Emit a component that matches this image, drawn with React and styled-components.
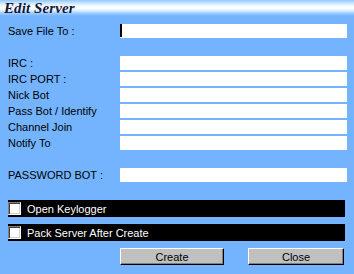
import React from "react";
import styled, { createGlobalStyle } from "styled-components";

const Global = createGlobalStyle`
  html, body { margin: 0; padding: 0; background: #74b4ff; }
  body { font-family: "Liberation Sans", Arial, sans-serif; }
`;

const Window = styled.div`
  width: 354px;
  height: 274px;
  background: #74b4ff;
  box-sizing: border-box;
  display: flex;
  flex-direction: column;
  overflow: hidden;
`;

const Header = styled.div`
  height: 24px;
  background: linear-gradient(
    to bottom,
    #92c8ff 0px,
    #c8e4ff 3px,
    #f4faff 6px,
    #ffffff 8px,
    #d6ebff 11px,
    #9fceff 13px,
    #74b4ff 16px,
    #74b4ff 100%
  );
  padding-left: 4px;
  box-sizing: border-box;
`;

const Title = styled.div`
  font-family: "Liberation Serif", "Times New Roman", serif;
  font-style: italic;
  font-weight: bold;
  font-size: 15px;
  line-height: 17px;
  color: #16163c;
  letter-spacing: 0.1px;
`;

const Body = styled.div`
  padding: 0 7px 0 8px;
  display: flex;
  flex-direction: column;
`;

const Group = styled.div`
  display: flex;
  flex-direction: column;
  gap: 2px;
  margin-top: ${(p) => p.$top || 0}px;
`;

const Row = styled.div`
  display: flex;
  align-items: center;
  height: 14px;
`;

const Label = styled.div`
  width: 112px;
  flex: none;
  font-size: 11px;
  color: #000;
  line-height: 14px;
  white-space: nowrap;
`;

const Field = styled.div`
  width: 227px;
  height: 14px;
  background: #fff;
  position: relative;
`;

const Caret = styled.span`
  position: absolute;
  left: 0;
  top: 0;
  width: 2px;
  height: 13px;
  background: #000;
`;

const CheckBar = styled.div`
  width: 337px;
  height: 17px;
  background: #000;
  display: flex;
  align-items: center;
  margin-top: ${(p) => p.$top || 0}px;
`;

const Box = styled.span`
  width: 13px;
  height: 13px;
  box-sizing: border-box;
  background: #fff;
  border-top: 1px solid #808080;
  border-left: 1px solid #808080;
  border-bottom: 1px solid #ffffff;
  border-right: 1px solid #ffffff;
  box-shadow: inset 1px 1px 0 #404040, inset -1px -1px 0 #d4d0c8;
  flex: none;
`;

const CheckText = styled.span`
  margin-left: 6px;
  color: #fff;
  font-size: 11px;
  line-height: 14px;
  white-space: nowrap;
`;

const Buttons = styled.div`
  display: flex;
  margin-top: 7px;
  padding-left: 112px;
  gap: 24px;
`;

const Button = styled.div`
  width: ${(p) => p.$w}px;
  height: 17px;
  box-sizing: border-box;
  background: #c0c0c0;
  border-top: 1px solid #ffffff;
  border-left: 1px solid #ffffff;
  border-right: 1px solid #000;
  border-bottom: 1px solid #000;
  box-shadow: inset -1px -1px 0 #808080;
  display: flex;
  align-items: center;
  justify-content: center;
  font-size: 11px;
  color: #000;
`;

const rows = ["IRC :", "IRC PORT :", "Nick Bot", "Pass Bot / Identify", "Channel Join", "Notify To"];

export default function App() {
  return (
    <>
      <Global />
      <Window>
        <Header>
          <Title>Edit Server</Title>
        </Header>
        <Body>
          <Group>
            <Row>
              <Label>Save File To :</Label>
              <Field>
                <Caret />
              </Field>
            </Row>
          </Group>
          <Group $top={18}>
            {rows.map((r) => (
              <Row key={r}>
                <Label>{r}</Label>
                <Field />
              </Row>
            ))}
          </Group>
          <Group $top={18}>
            <Row>
              <Label>PASSWORD BOT :</Label>
              <Field />
            </Row>
          </Group>
          <CheckBar $top={18}>
            <Box />
            <CheckText>Open Keylogger</CheckText>
          </CheckBar>
          <CheckBar $top={7}>
            <Box />
            <CheckText>Pack Server After Create</CheckText>
          </CheckBar>
          <Buttons>
            <Button $w={104}>Create</Button>
            <Button $w={96}>Close</Button>
          </Buttons>
        </Body>
      </Window>
    </>
  );
}
